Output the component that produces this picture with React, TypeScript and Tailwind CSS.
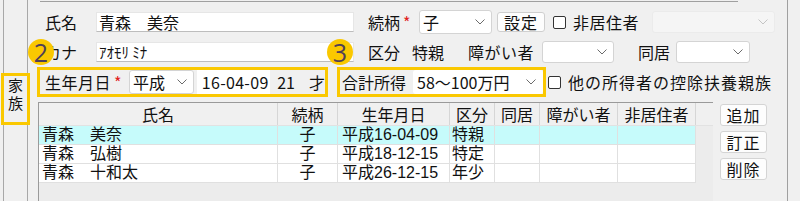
import React from 'react'

const font = "font-['Noto_Sans_CJK_JP','Noto_Sans',sans-serif]"
// tighter line box for the 19px table rows
const rowFont = "font-['Liberation_Sans','Noto_Sans_CJK_JP',sans-serif]"

function Chevron({ light = false }: { light?: boolean }) {
  return (
    <svg width="10" height="6" viewBox="0 0 10 6" className="shrink-0">
      <polyline
        points="0.5,0.5 5,5 9.5,0.5"
        fill="none"
        stroke={light ? '#c4c4c4' : '#6b6b6b'}
        strokeWidth="1"
      />
    </svg>
  )
}

function Select({
  value,
  className,
  disabled = false,
}: {
  value?: string
  className: string
  disabled?: boolean
}) {
  return (
    <div
      className={
        'flex items-center justify-between rounded-[3px] border pl-[3px] pr-[6px] ' +
        (disabled ? 'border-[#ebebeb] bg-[#f5f5f5] ' : 'border-[#d4d4d4] bg-white ') +
        className
      }
    >
      <span className="leading-none">{value}</span>
      <Chevron light={disabled} />
    </div>
  )
}

function Checkbox() {
  return <div className="h-[13px] w-[13px] shrink-0 rounded-[2px] border border-[#333] bg-white" />
}

function Marker({ n, className }: { n: string; className: string }) {
  return (
    <div
      className={
        "absolute flex h-[26px] w-[26px] items-center justify-center rounded-full bg-[#fac800] font-['Open_Sans',sans-serif] text-[25px] leading-none text-[#4f3f58] " +
        className
      }
    >
      {n}
    </div>
  )
}

const columns = [
  { label: '氏名', w: 'w-[239px]' },
  { label: '続柄', w: 'w-[60px]' },
  { label: '生年月日', w: 'w-[112px]' },
  { label: '区分', w: 'w-[45px]' },
  { label: '同居', w: 'w-[45px]' },
  { label: '障がい者', w: 'w-[78px]' },
  { label: '非居住者', w: 'w-[78px]' },
]

const family = [
  { name: '青森　美奈', rel: '子', birth: '平成16-04-09', kind: '特親', selected: true },
  { name: '青森　弘樹', rel: '子', birth: '平成18-12-15', kind: '特定', selected: false },
  { name: '青森　十和太', rel: '子', birth: '平成26-12-15', kind: '年少', selected: false },
]

export default function App() {
  return (
    <div className={'relative flex h-[201px] w-[800px] overflow-hidden bg-[#f0f0f0] text-[16px] leading-[20px] text-[#111] ' + font}>
      {/* Left tab strip */}
      <div className="w-[28px] shrink-0">
        <div className={'ml-[3px] flex h-full w-[25px] flex-col items-center border-l border-r border-[#a8a8a8] pt-[77px] text-[15px] leading-[18px] ' + rowFont}>
          <span>家</span>
          <span>族</span>
        </div>
      </div>

      {/* Main panel */}
      <div className="w-[760px] shrink-0 border-r border-[#a0a0a0]">
        <div className="ml-[12px] mt-px h-px w-[698px] bg-[#a0a0a0]" />

        {/* Row 1 */}
        <div className="ml-[17px] mt-[8px] flex h-[24px] items-center">
          <span className="w-[51px]">氏名</span>
          <div className="flex h-[20px] w-[258px] items-center border border-[#e6e6e6] border-b-[#bdbdbd] bg-white pl-[2px]">
            青森　美奈
          </div>
          <span className="ml-[14px] flex w-[51px]">
            続柄<span className="ml-[3px] text-[#e02020]">*</span>
          </span>
          <Select value="子" className="h-[24px] w-[73px]" />
          <button className="ml-[5px] flex h-[20px] w-[48px] items-center justify-center rounded-[3px] border border-[#cfcfcf] bg-[#fdfdfd] tracking-[1px]">
            設定
          </button>
          <div className="ml-[8px]">
            <Checkbox />
          </div>
          <span className="ml-[7px] tracking-[0.5px]">非居住者</span>
          <Select className="ml-[13px] h-[22px] w-[123px]" disabled />
        </div>

        {/* Row 2 */}
        <div className="ml-[17px] mt-[6px] flex h-[23px] items-center">
          <span className="w-[51px]">カナ</span>
          <div className="flex h-[20px] w-[258px] items-center border border-[#e6e6e6] border-b-[#bdbdbd] bg-white pl-[2px] text-[15px]">
            ｱｵﾓﾘ ﾐﾅ
          </div>
          <span className="ml-[14px] w-[44px]">区分</span>
          <span className="w-[56px]">特親</span>
          <span className="w-[74px] tracking-[0.5px]">障がい者</span>
          <Select className="h-[22px] w-[72px]" />
          <span className="ml-[24px] w-[38px]">同居</span>
          <Select className="h-[22px] w-[74px]" />
        </div>

        {/* Row 3 */}
        <div className="ml-[9px] mt-[4px] flex h-[30px] items-center">
          <div className="flex h-[30px] w-[291px] items-center border-[3px] border-[#fac800]">
            <span className="ml-[5px] flex w-[86px] tracking-[0.5px]">
              生年月日<span className="ml-[3px] text-[#e02020]">*</span>
            </span>
            <Select value="平成" className="h-[24px] w-[66px]" />
            <div className="ml-[3px] flex h-[24px] w-[75px] items-center bg-white pl-[5px] tracking-[0.3px]">
              16-04-09
            </div>
            <span className="ml-[7px]">21</span>
            <span className="ml-[14px]">才</span>
          </div>
          <div className="ml-[9px] flex h-[30px] w-[209px] items-center border-[3px] border-[#fac800]">
            <span className="ml-[2px] w-[71px]">合計所得</span>
            <Select value="58〜100万円" className="h-[24px] w-[130px] border-transparent" />
          </div>
          <div className="ml-[2px]">
            <Checkbox />
          </div>
          <span className="ml-[7px] tracking-[1px]">他の所得者の控除扶養親族</span>
        </div>

        {/* Table + buttons */}
        <div className="ml-[10px] mt-[5px] flex">
          <div className="h-[99px] w-[675px] border-l border-t border-[#9a9a9a] bg-[#ececec]">
            <div className="flex h-[23px] border-b border-[#e2e2e2] bg-[#f0f0f0]">
              {columns.map((c) => (
                <div
                  key={c.label}
                  className={'flex items-center justify-center border-r border-[#d6d6d6] ' + c.w}
                >
                  {c.label}
                </div>
              ))}
            </div>
            {family.map((r) => (
              <div
                key={r.name}
                className={'flex h-[19px] w-[657px] border-b border-[#e0e0e0] leading-[18px] ' + rowFont + ' ' + (r.selected ? 'bg-[#c6fbfb]' : 'bg-white')}
              >
                <div className="flex w-[239px] items-center border-r border-[#e0e0e0] pl-[3px]">{r.name}</div>
                <div className="flex w-[60px] items-center justify-center border-r border-[#e0e0e0]">{r.rel}</div>
                <div className="flex w-[112px] items-center border-r border-[#e0e0e0] pl-[4px]">{r.birth}</div>
                <div className="flex w-[45px] items-center border-r border-[#e0e0e0] pl-[2px]">{r.kind}</div>
                <div className="w-[45px] border-r border-[#e0e0e0]" />
                <div className="w-[78px] border-r border-[#e0e0e0]" />
                <div className="w-[78px] border-r border-[#e0e0e0]" />
              </div>
            ))}
          </div>
          <div className="ml-[7px] mt-[2px] flex flex-col gap-[5px]">
            {['追加', '訂正', '削除'].map((b) => (
              <button
                key={b}
                className="flex h-[22px] w-[47px] items-center justify-center rounded-[3px] border border-[#d4d4d4] bg-[#fdfdfd] tracking-[1px]"
              >
                {b}
              </button>
            ))}
          </div>
        </div>
      </div>

      {/* Annotation overlays */}
      <div className="absolute left-[1px] top-[73px] h-[52px] w-[29px] border-[3px] border-[#fac800]" />
      <Marker n="2" className="left-[28px] top-[39px]" />
      <Marker n="3" className="left-[327px] top-[39px]" />
    </div>
  )
}
